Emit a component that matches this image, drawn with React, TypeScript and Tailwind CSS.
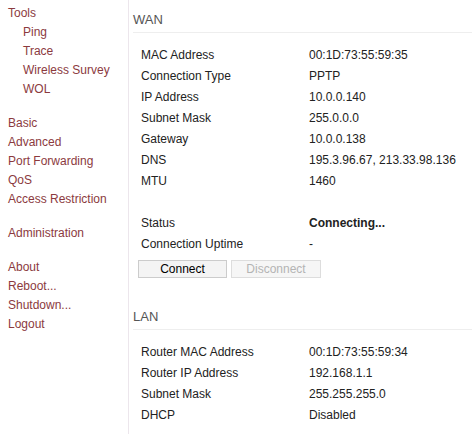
import React from "react";

const Row = ({ label, value, bold }: { label: string; value: string; bold?: boolean }) => (
  <div className="flex h-[21px] items-center">
    <div className="w-[168px] shrink-0">{label}</div>
    <div className={bold ? "font-bold" : ""}>{value}</div>
  </div>
);

const Link = ({ children, sub }: { children: React.ReactNode; sub?: boolean }) => (
  <div className={`h-[19px] leading-[19px] ${sub ? "pl-[23px]" : "pl-[8px]"}`}>{children}</div>
);

export default function App() {
  return (
    <div
      className="flex w-[472px] h-[434px] bg-white text-[12px] text-[#222] overflow-hidden"
      style={{ fontFamily: '"Liberation Sans", Arial, sans-serif' }}
    >
      <div className="w-[129px] shrink-0 border-r border-[#ece6ec] pt-[4px] text-[#8b3a3e]">
        <Link>Tools</Link>
        <Link sub>Ping</Link>
        <Link sub>Trace</Link>
        <Link sub>Wireless Survey</Link>
        <Link sub>WOL</Link>
        <div className="h-[15px]" />
        <Link>Basic</Link>
        <Link>Advanced</Link>
        <Link>Port Forwarding</Link>
        <Link>QoS</Link>
        <Link>Access Restriction</Link>
        <div className="h-[15px]" />
        <Link>Administration</Link>
        <div className="h-[15px]" />
        <Link>About</Link>
        <Link>Reboot...</Link>
        <Link>Shutdown...</Link>
        <Link>Logout</Link>
      </div>
      <div className="flex-1 pl-[4px]">
        <div className="pt-[12px] pb-[4px] leading-[16px] text-[13px] text-[#555] border-b border-[#eeeeee]">WAN</div>
        <div className="mt-[11px] pl-[8px]">
          <Row label="MAC Address" value="00:1D:73:55:59:35" />
          <Row label="Connection Type" value="PPTP" />
          <Row label="IP Address" value="10.0.0.140" />
          <Row label="Subnet Mask" value="255.0.0.0" />
          <Row label="Gateway" value="10.0.0.138" />
          <Row label="DNS" value="195.3.96.67, 213.33.98.136" />
          <Row label="MTU" value="1460" />
          <div className="h-[21px]" />
          <Row label="Status" value="Connecting..." bold />
          <Row label="Connection Uptime" value="-" />
        </div>
        <div className="flex gap-[4px] pl-[5px] mt-[6px]">
          <button className="w-[89px] h-[18px] bg-[#f4f4f4] border border-[#cccccc] text-[12px] text-black leading-none">
            Connect
          </button>
          <button className="w-[90px] h-[18px] bg-[#f6f6f6] border border-[#dddddd] text-[12px] text-[#b4b4b4] leading-none">
            Disconnect
          </button>
        </div>
        <div className="mt-[31px] pb-[4px] leading-[16px] text-[13px] text-[#555] border-b border-[#eeeeee]">LAN</div>
        <div className="mt-[11px] pl-[8px]">
          <Row label="Router MAC Address" value="00:1D:73:55:59:34" />
          <Row label="Router IP Address" value="192.168.1.1" />
          <Row label="Subnet Mask" value="255.255.255.0" />
          <Row label="DHCP" value="Disabled" />
        </div>
      </div>
    </div>
  );
}
